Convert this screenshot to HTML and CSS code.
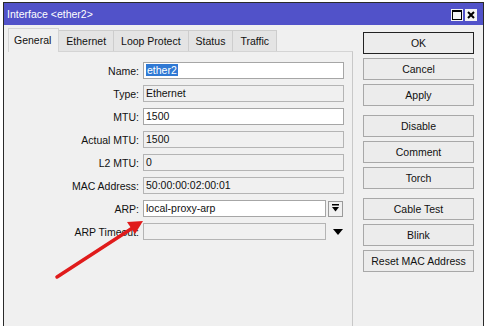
FILE: index.html
```html
<!doctype html>
<html lang="en">
  <head>
    <meta charset="UTF-8" />
    <title>Interface &lt;ether2&gt;</title>
    <link rel="stylesheet" href="styles.css">
  </head>
  <body>
    <div class="window">
      <div class="titlebar">
        <span class="title">Interface &lt;ether2&gt;</span>
        <div class="title-btns">
          <span class="tbtn">
            <svg width="12" height="12" viewBox="0 0 12 12"><rect x="1.5" y="1.5" width="9" height="9" fill="none" stroke="#000" stroke-width="1"/><rect x="1" y="1" width="10" height="2" fill="#000"/></svg>
          </span>
          <span class="tbtn">
            <svg width="12" height="12" viewBox="0 0 12 12"><path d="M3 3 L9 9 M9 3 L3 9" stroke="#000" stroke-width="2"/></svg>
          </span>
        </div>
      </div>

      <div class="main">
        <div class="left">
          <div class="tabs">
            <div class="tab active">General</div>
            <div class="tab">Ethernet</div>
            <div class="tab">Loop Protect</div>
            <div class="tab">Status</div>
            <div class="tab">Traffic</div>
          </div>
          <div class="panel">
            <div class="form">
              <label>Name:</label>
              <div class="field"><span class="sel">ether2</span></div>

              <label>Type:</label>
              <div class="field ro">Ethernet</div>

              <label>MTU:</label>
              <div class="field">1500</div>

              <label>Actual MTU:</label>
              <div class="field ro">1500</div>

              <label>L2 MTU:</label>
              <div class="field ro">0</div>

              <label>MAC Address:</label>
              <div class="field ro">50:00:00:02:00:01</div>

              <label>ARP:</label>
              <div class="combo">
                <div class="field">local-proxy-arp</div>
                <span class="drop">
                  <svg width="9" height="9" viewBox="0 0 9 9"><rect x="1" y="0" width="7" height="1.5" fill="#000"/><path d="M1 3 L8 3 L4.5 7.5 Z" fill="#000"/></svg>
                </span>
              </div>

              <label>ARP Timeout:</label>
              <div class="combo">
                <div class="field ro"></div>
                <span class="tri">
                  <svg width="10" height="6" viewBox="0 0 10 6"><path d="M0 0 L10 0 L5 6 Z" fill="#000"/></svg>
                </span>
              </div>
            </div>
          </div>
        </div>

        <div class="buttons">
          <div class="btn-group">
            <button class="btn default">OK</button>
            <button class="btn">Cancel</button>
            <button class="btn">Apply</button>
          </div>
          <div class="btn-group">
            <button class="btn">Disable</button>
            <button class="btn">Comment</button>
            <button class="btn">Torch</button>
          </div>
          <div class="btn-group">
            <button class="btn">Cable Test</button>
            <button class="btn">Blink</button>
            <button class="btn">Reset MAC Address</button>
          </div>
        </div>
      </div>
    </div>

    <!-- annotation arrow over the form -->
    <svg class="arrow" width="486" height="326" viewBox="0 0 486 326">
      <line x1="57" y1="277" x2="134" y2="227" stroke="#e01b1b" stroke-width="3.5" stroke-linecap="round"/>
      <path d="M143 221 L135 234 L127 222 Z" fill="#e01b1b"/>
    </svg>
  </body>
</html>
```

FILE: styles.css
```css
body {
  margin: 0;
  padding: 2px 2px 0 3px;
  background: #fff;
  font-family: "Liberation Sans", Arial, sans-serif;
  font-size: 10.5px;
  color: #111;
  height: 326px;
  overflow: hidden;
  box-sizing: border-box;
}
.window {
  border: 1px solid #2a2a2a;
  border-bottom: none;
  background: #f0f0f0;
  height: 324px;
  box-sizing: border-box;
  display: flex;
  flex-direction: column;
}
.titlebar {
  height: 22px;
  flex: none;
  background: #5152c9;
  color: #fff;
  display: flex;
  align-items: center;
  justify-content: space-between;
  padding: 0 6px 0 3px;
}
.title-btns {
  display: flex;
  gap: 2px;
  margin-top: 1px;
}
.tbtn {
  width: 12px;
  height: 12px;
  background: #f4f4f4;
  display: flex;
}
.main {
  flex: 1;
  display: flex;
  padding: 2px 0 0 4px;
}
.left {
  width: 345px;
  display: flex;
  flex-direction: column;
}
.tabs {
  display: flex;
  align-items: flex-end;
  height: 24px;
}
.tab {
  height: 21px;
  line-height: 20px;
  padding: 0 7px;
  background: #e4e4e4;
  border: 1px solid #cdcdcd;
  border-bottom: none;
  box-sizing: border-box;
  margin-left: -1px;
}
.tab.active {
  height: 24px;
  line-height: 22px;
  background: #f0f0f0;
  margin-left: 0;
  padding: 0 7px 0 5px;
  border-color: #d4d4d4;
  position: relative;
  z-index: 1;
  margin-bottom: -1px;
}
.panel {
  flex: 1;
  border-top: 1px solid #d4d4d4;
  border-right: 1px solid #c8c8c8;
  padding-top: 10px;
}
.form {
  display: grid;
  grid-template-columns: 131px 201px;
  column-gap: 4px;
  row-gap: 6px;
  align-items: center;
}
.form label {
  text-align: right;
}
.field {
  height: 17px;
  line-height: 15px;
  border: 1px solid #a6a6a6;
  background: #fff;
  box-sizing: border-box;
  padding-left: 2px;
  white-space: nowrap;
}
.field.ro {
  background: #f0f0f0;
  border-color: #b4b4b4;
}
.sel {
  background: #3079d4;
  color: #fff;
  padding: 0 1px;
}
.combo {
  display: flex;
  align-items: center;
}
.combo .field {
  width: 183px;
}
.drop {
  width: 15px;
  height: 16px;
  margin-left: 2px;
  border: 1px solid #9a9a9a;
  box-sizing: border-box;
  background: #f0f0f0;
  display: flex;
  align-items: center;
  justify-content: center;
}
.tri {
  margin-left: 7px;
  display: flex;
}
.buttons {
  margin-left: 10px;
  padding-top: 5px;
  display: flex;
  flex-direction: column;
  gap: 9px;
}
.btn-group {
  display: flex;
  flex-direction: column;
  gap: 4px;
}
.btn {
  width: 111px;
  height: 22px;
  font-family: "Liberation Sans", Arial, sans-serif;
  font-size: 10.5px;
  color: #111;
  background: #ececec;
  border: 1px solid #a8a8a8;
  padding: 0;
}
.btn.default {
  border-color: #222;
}
.arrow {
  position: absolute;
  left: 0;
  top: 0;
  pointer-events: none;
}
```
